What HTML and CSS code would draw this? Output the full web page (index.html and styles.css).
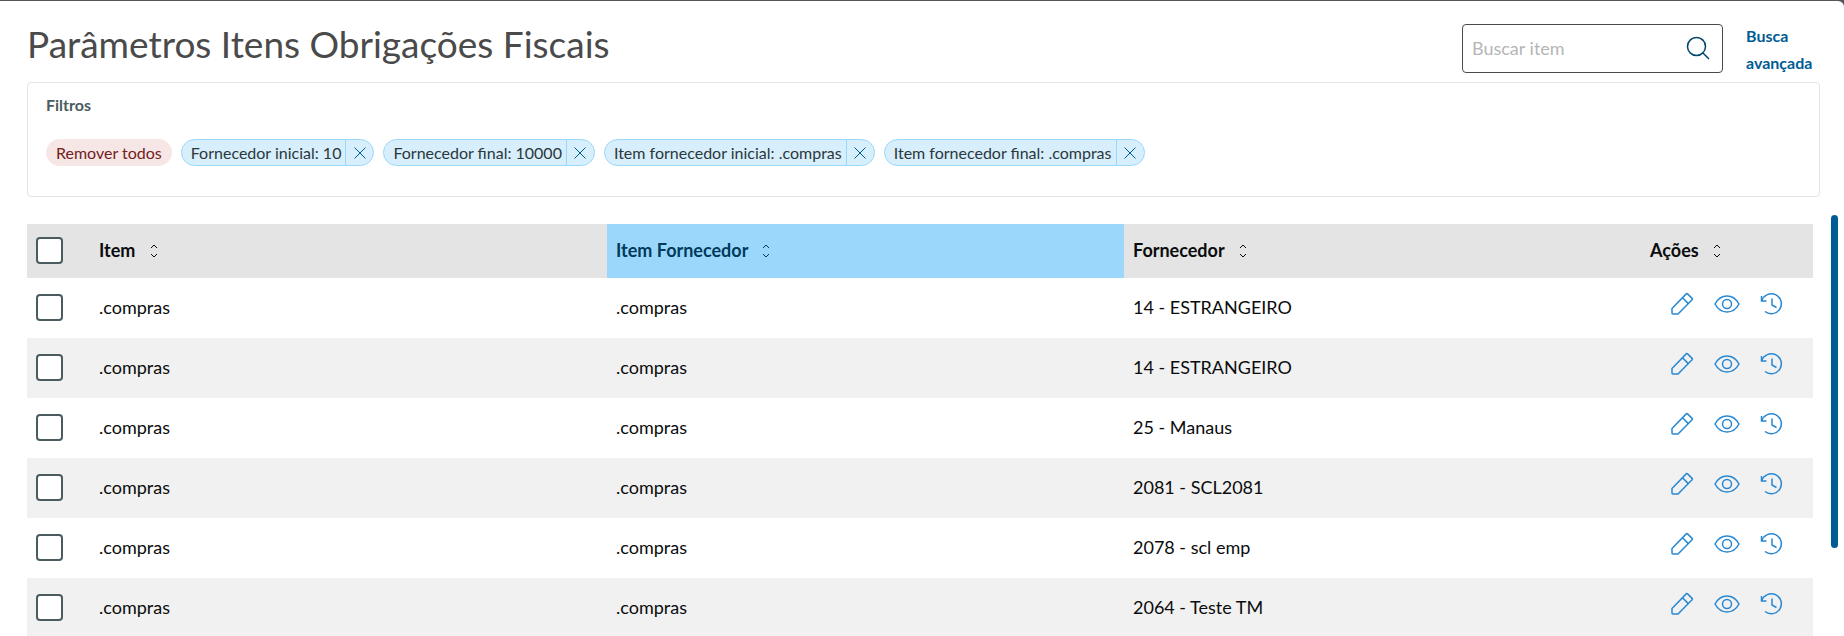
FILE: index.html
```
<!DOCTYPE html>
<html lang="pt-BR">
	<head>
		<meta charset="UTF-8" />
		<meta name="viewport" content="width=device-width, initial-scale=1.0" />
		<title>Parâmetros Itens Obrigações Fiscais</title>
		<link rel="stylesheet" href="styles.css">
	</head>
	<body>
		<svg class="sprite" aria-hidden="true">
			<symbol id="sort" viewBox="0 0 8 14">
				<path d="M1 4l3-3 3 3M1 10l3 3 3-3" />
			</symbol>
			<symbol id="close" viewBox="0 0 12 12">
				<path d="M.5.5l11 11M11.5.5l-11 11" />
			</symbol>
			<symbol id="edit" viewBox="0 0 26 26">
				<path d="M3 17.500L17.200 2.900a1 1 0 0 1 1.400 0l4.500 4.500a1 1 0 0 1 0 1.400L9 23H4a1 1 0 0 1-1-1zM13.500 6.800l5.800 5.800" />
			</symbol>
			<symbol id="view" viewBox="0 0 26 26">
				<path d="M1 13c2.800-5.200 7-8 12-8s9.200 2.800 12 8c-2.800 5.200-7 8-12 8s-9.200-2.800-12-8z" />
				<circle cx="13" cy="13" r="4.500" />
			</symbol>
			<symbol id="history" viewBox="0 0 26 26">
				<path d="M2.500 5v5h5M2.800 9.700A10 10 0 1 1 6 20.500M13 7.500V14l4.500 2.500" />
			</symbol>
		</svg>

		<main class="page">
			<header class="page-header">
				<h1>Parâmetros Itens Obrigações Fiscais</h1>
				<form class="search">
					<input type="text" id="search" placeholder="Buscar item" aria-label="Buscar item" />
					<button type="button" aria-label="Buscar">
						<svg viewBox="0 0 24 24"><circle cx="10.500" cy="10.500" r="9" /><path d="M17 17l6 6" /></svg>
					</button>
				</form>
				<a class="advanced" href="#">Busca avançada</a>
			</header>

			<section class="filters">
				<h2>Filtros</h2>
				<div class="tags">
					<button class="tag-clear">Remover todos</button>
					<div class="tag">
						<span>Fornecedor inicial: 10</span>
						<button aria-label="Remover"><svg><use href="#close" /></svg></button>
					</div>
					<div class="tag">
						<span>Fornecedor final: 10000</span>
						<button aria-label="Remover"><svg><use href="#close" /></svg></button>
					</div>
					<div class="tag">
						<span>Item fornecedor inicial: .compras</span>
						<button aria-label="Remover"><svg><use href="#close" /></svg></button>
					</div>
					<div class="tag">
						<span>Item fornecedor final: .compras</span>
						<button aria-label="Remover"><svg><use href="#close" /></svg></button>
					</div>
				</div>
			</section>

			<div class="list">
				<table>
					<thead>
						<tr>
							<th class="col-check"><input type="checkbox" aria-label="Selecionar todos" /></th>
							<th>Item <svg class="sort"><use href="#sort" /></svg></th>
							<th class="selected">Item Fornecedor <svg class="sort"><use href="#sort" /></svg></th>
							<th>Fornecedor <svg class="sort"><use href="#sort" /></svg></th>
							<th class="col-actions">Ações <svg class="sort"><use href="#sort" /></svg></th>
						</tr>
					</thead>
					<tbody>
						<tr>
							<td><input type="checkbox" aria-label="Selecionar" /></td>
							<td>.compras</td>
							<td>.compras</td>
							<td>14 - ESTRANGEIRO</td>
							<td>
								<div class="actions">
									<button aria-label="Editar"><svg><use href="#edit" /></svg></button>
									<button aria-label="Visualizar"><svg><use href="#view" /></svg></button>
									<button aria-label="Histórico"><svg><use href="#history" /></svg></button>
								</div>
							</td>
						</tr>
						<tr>
							<td><input type="checkbox" aria-label="Selecionar" /></td>
							<td>.compras</td>
							<td>.compras</td>
							<td>14 - ESTRANGEIRO</td>
							<td>
								<div class="actions">
									<button aria-label="Editar"><svg><use href="#edit" /></svg></button>
									<button aria-label="Visualizar"><svg><use href="#view" /></svg></button>
									<button aria-label="Histórico"><svg><use href="#history" /></svg></button>
								</div>
							</td>
						</tr>
						<tr>
							<td><input type="checkbox" aria-label="Selecionar" /></td>
							<td>.compras</td>
							<td>.compras</td>
							<td>25 - Manaus</td>
							<td>
								<div class="actions">
									<button aria-label="Editar"><svg><use href="#edit" /></svg></button>
									<button aria-label="Visualizar"><svg><use href="#view" /></svg></button>
									<button aria-label="Histórico"><svg><use href="#history" /></svg></button>
								</div>
							</td>
						</tr>
						<tr>
							<td><input type="checkbox" aria-label="Selecionar" /></td>
							<td>.compras</td>
							<td>.compras</td>
							<td>2081 - SCL2081</td>
							<td>
								<div class="actions">
									<button aria-label="Editar"><svg><use href="#edit" /></svg></button>
									<button aria-label="Visualizar"><svg><use href="#view" /></svg></button>
									<button aria-label="Histórico"><svg><use href="#history" /></svg></button>
								</div>
							</td>
						</tr>
						<tr>
							<td><input type="checkbox" aria-label="Selecionar" /></td>
							<td>.compras</td>
							<td>.compras</td>
							<td>2078 - scl emp</td>
							<td>
								<div class="actions">
									<button aria-label="Editar"><svg><use href="#edit" /></svg></button>
									<button aria-label="Visualizar"><svg><use href="#view" /></svg></button>
									<button aria-label="Histórico"><svg><use href="#history" /></svg></button>
								</div>
							</td>
						</tr>
						<tr>
							<td><input type="checkbox" aria-label="Selecionar" /></td>
							<td>.compras</td>
							<td>.compras</td>
							<td>2064 - Teste TM</td>
							<td>
								<div class="actions">
									<button aria-label="Editar"><svg><use href="#edit" /></svg></button>
									<button aria-label="Visualizar"><svg><use href="#view" /></svg></button>
									<button aria-label="Histórico"><svg><use href="#history" /></svg></button>
								</div>
							</td>
						</tr>
					</tbody>
				</table>
				<div class="scrollbar"></div>
			</div>
		</main>
	</body>
</html>
```
FILE: styles.css
```
* {
	box-sizing: border-box;
}
body {
	height: 100vh;
	margin: 0;
	padding-top: 1px;
	overflow: hidden;
	background-color: #56545b;
	font-family: Lato, sans-serif;
	font-size: 18px;
	color: #0b0c0d;
}
svg {
	fill: none;
	stroke: currentColor;
}
button {
	padding: 0;
	border: none;
	background: none;
	font: inherit;
	color: inherit;
	cursor: pointer;
}
.sprite {
	display: none;
}
.page {
	min-height: 100%;
	padding: 23px 6px 0 27px;
	border-top-right-radius: 6px;
	background-color: #fff;
}

/* title and search */
.page-header {
	display: flex;
	align-items: flex-start;
	height: 58px;
	padding-right: 18px;
}
h1 {
	flex: 1;
	margin: 0;
	font-size: 37px;
	font-weight: 400;
	line-height: 40px;
	color: #4a4a4a;
}
.search {
	display: flex;
	align-items: center;
	width: 261px;
	height: 49px;
	padding: 0 12px 2px 9px;
	border: 1px solid #4a4a4a;
	border-radius: 4px;
}
.search input {
	flex: 1;
	min-width: 0;
	padding: 0;
	border: none;
	outline: none;
	background: none;
	font: inherit;
}
.search input::placeholder {
	color: #b4b6b8;
}
.search button {
	display: flex;
	color: #00456e;
}
.search svg {
	width: 24px;
	height: 24px;
	stroke-width: 1.5;
}
.advanced {
	width: 74px;
	margin: -2px 0 0 23px;
	font-size: 16px;
	font-weight: 700;
	line-height: 27px;
	color: #005c94;
	text-decoration: none;
}

/* filters */
.filters {
	margin-right: 18px;
	padding: 8px 18px 30px;
	border: 1px solid #e3e4e5;
	border-radius: 4px;
}
h2 {
	margin: 0 0 21px;
	font-size: 16px;
	font-weight: 700;
	line-height: 27px;
	color: #4a5c60;
}
.tags {
	display: flex;
	flex-wrap: wrap;
	gap: 9px;
	font-size: 16px;
	line-height: 25px;
}
.tag-clear {
	padding: 0 9px;
	border: 1px solid #f6e6e5;
	border-radius: 14px;
	background-color: #f6e6e5;
	color: #72211d;
}
.tag {
	display: flex;
	border: 1px solid #9bd7fa;
	border-radius: 14px;
	background-color: #d7effd;
	color: #2c3739;
}
.tag span {
	padding: 0 4px 0 9px;
}
.tag button {
	display: flex;
	align-items: center;
	justify-content: center;
	width: 28px;
	border-left: 1px solid #9bd7fa;
	color: #005c94;
}
.tag svg {
	width: 12px;
	height: 12px;
}

/* table */
.list {
	display: flex;
	align-items: flex-start;
	gap: 18px;
	padding-top: 18px;
}
table {
	flex: 1;
	width: 100%;
	margin-top: 9px;
	border-collapse: collapse;
	table-layout: fixed;
}
th,
td {
	height: 60px;
	padding: 0 9px 2px;
	text-align: left;
}
th {
	height: 54px;
	background-color: #e4e4e4;
	font-weight: 700;
}
th.selected {
	background-color: #9bd7fb;
	color: #003b5c;
}
.col-check {
	width: 63px;
}
.col-actions {
	width: 172px;
}
tbody tr:nth-child(even) {
	background-color: #f1f1f1;
}
.sort {
	width: 8px;
	height: 14px;
	margin-left: 10px;
	vertical-align: -1px;
}
input[type="checkbox"] {
	display: block;
	appearance: none;
	width: 27px;
	height: 27px;
	margin: 0;
	border: 2px solid #4a5c60;
	border-radius: 4px;
	background-color: #fff;
}
.actions {
	display: flex;
	gap: 19px;
	padding: 0 0 6px 19px;
	color: #2888d1;
}
.actions button {
	display: flex;
}
.actions svg {
	width: 26px;
	height: 26px;
	stroke-width: 1.5;
}
.scrollbar {
	width: 7px;
	height: 333px;
	border-radius: 4px;
	background-color: #005c94;
}
```
